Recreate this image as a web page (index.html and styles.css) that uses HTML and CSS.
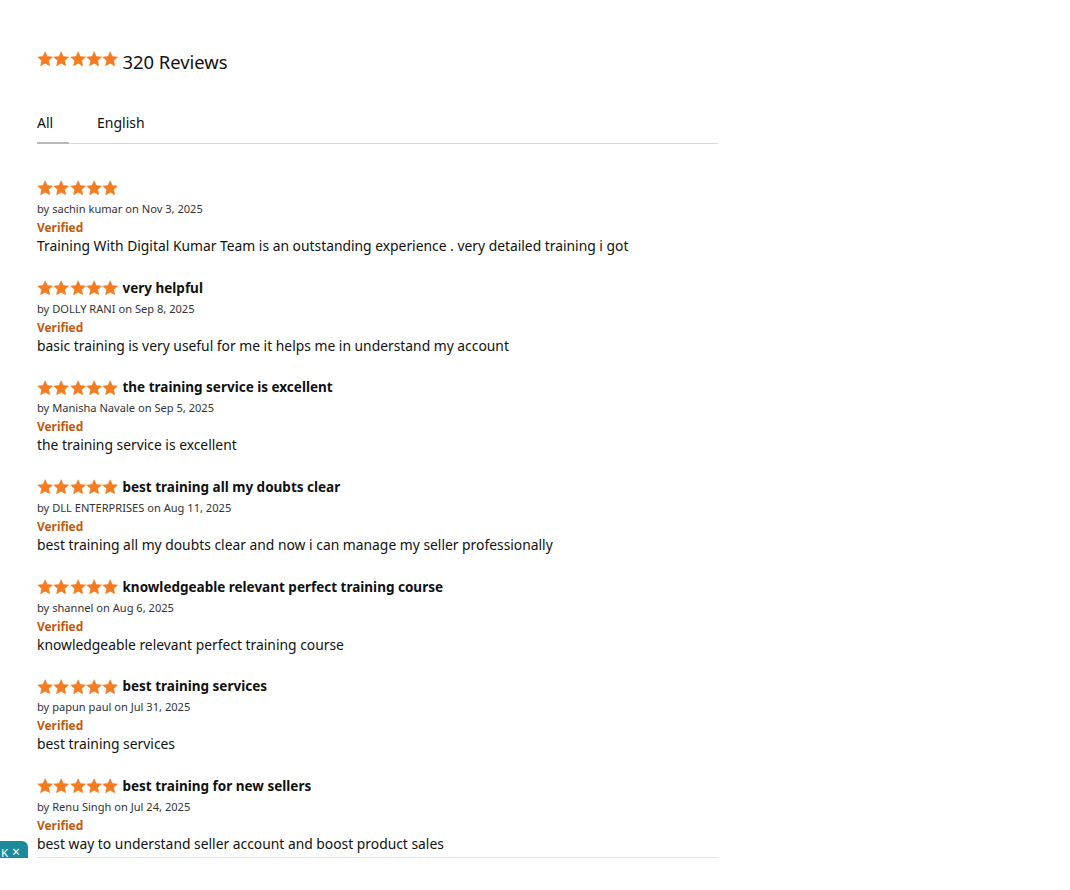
FILE: index.html
```html
<!DOCTYPE html>
<html lang="en">
<head>
<meta charset="utf-8">
<title>Reviews</title>
<link rel="stylesheet" href="styles.css">
</head>
<body>
<svg width="0" height="0" class="defs">
  <defs>
    <symbol id="star" viewBox="0 0 24 23">
      <path d="M12 1L15.17 8.13L22.94 8.95L17.14 14.17L18.76 21.8L12 17.9L5.24 21.8L6.86 14.17L1.06 8.95L8.83 8.13Z" stroke="#f47b1f" stroke-width="0.8" stroke-linejoin="round"/>
    </symbol>
  </defs>
</svg>

<main class="reviews">
  <header class="summary">
    <span class="stars stars-lg">
      <svg><use href="#star"/></svg><svg><use href="#star"/></svg><svg><use href="#star"/></svg><svg><use href="#star"/></svg><svg><use href="#star"/></svg>
    </span>
    <span class="count">320 Reviews</span>
  </header>

  <nav class="tabs">
    <span class="tab active">All</span>
    <span class="tab">English</span>
  </nav>

  <section class="list">
    <article class="review">
      <div class="head"><span class="stars"><svg><use href="#star"/></svg><svg><use href="#star"/></svg><svg><use href="#star"/></svg><svg><use href="#star"/></svg><svg><use href="#star"/></svg></span></div>
      <div class="by">by sachin kumar on Nov 3, 2025</div>
      <div class="verified">Verified</div>
      <p class="body">Training With Digital Kumar Team is an outstanding experience . very detailed training i got</p>
    </article>

    <article class="review">
      <div class="head"><span class="stars"><svg><use href="#star"/></svg><svg><use href="#star"/></svg><svg><use href="#star"/></svg><svg><use href="#star"/></svg><svg><use href="#star"/></svg></span><span class="title">very helpful</span></div>
      <div class="by">by DOLLY RANI on Sep 8, 2025</div>
      <div class="verified">Verified</div>
      <p class="body">basic training is very useful for me it helps me in understand my account</p>
    </article>

    <article class="review">
      <div class="head"><span class="stars"><svg><use href="#star"/></svg><svg><use href="#star"/></svg><svg><use href="#star"/></svg><svg><use href="#star"/></svg><svg><use href="#star"/></svg></span><span class="title">the training service is excellent</span></div>
      <div class="by">by Manisha Navale on Sep 5, 2025</div>
      <div class="verified">Verified</div>
      <p class="body">the training service is excellent</p>
    </article>

    <article class="review">
      <div class="head"><span class="stars"><svg><use href="#star"/></svg><svg><use href="#star"/></svg><svg><use href="#star"/></svg><svg><use href="#star"/></svg><svg><use href="#star"/></svg></span><span class="title">best training all my doubts clear</span></div>
      <div class="by">by DLL ENTERPRISES on Aug 11, 2025</div>
      <div class="verified">Verified</div>
      <p class="body">best training all my doubts clear and now i can manage my seller professionally</p>
    </article>

    <article class="review">
      <div class="head"><span class="stars"><svg><use href="#star"/></svg><svg><use href="#star"/></svg><svg><use href="#star"/></svg><svg><use href="#star"/></svg><svg><use href="#star"/></svg></span><span class="title">knowledgeable relevant perfect training course</span></div>
      <div class="by">by shannel on Aug 6, 2025</div>
      <div class="verified">Verified</div>
      <p class="body">knowledgeable relevant perfect training course</p>
    </article>

    <article class="review">
      <div class="head"><span class="stars"><svg><use href="#star"/></svg><svg><use href="#star"/></svg><svg><use href="#star"/></svg><svg><use href="#star"/></svg><svg><use href="#star"/></svg></span><span class="title">best training services</span></div>
      <div class="by">by papun paul on Jul 31, 2025</div>
      <div class="verified">Verified</div>
      <p class="body">best training services</p>
    </article>

    <article class="review last">
      <div class="head"><span class="stars"><svg><use href="#star"/></svg><svg><use href="#star"/></svg><svg><use href="#star"/></svg><svg><use href="#star"/></svg><svg><use href="#star"/></svg></span><span class="title">best training for new sellers</span></div>
      <div class="by">by Renu Singh on Jul 24, 2025</div>
      <div class="verified">Verified</div>
      <p class="body">best way to understand seller account and boost product sales</p>
    </article>
  </section>
</main>

<div class="chip">K <span class="x">×</span></div>
</body>
</html>
```

FILE: styles.css
```css
html, body {
  margin: 0;
  padding: 0;
  background: #ffffff;
}

body {
  font-family: "Noto Sans", "DejaVu Sans", sans-serif;
  color: #0f1111;
  width: 1070px;
  height: 890px;
  overflow: hidden;
  position: relative;
}

.defs {
  position: absolute;
  width: 0;
  height: 0;
}

.reviews {
  width: 681px;
  padding: 48px 0 0 37px;
}

/* star row */
.stars {
  display: inline-flex;
  fill: #f47b1f;
}

.stars svg {
  width: 16.3px;
  height: 15.6px;
  display: block;
}

.summary {
  display: flex;
  align-items: center;
  height: 26px;
}

.summary .stars {
  margin-top: -5px;
}

.count {
  font-size: 18.4px;
  margin-left: 4px;
  margin-top: 1px;
  color: #0f1111;
}

/* tabs */
.tabs {
  display: flex;
  margin-top: 39px;
  border-bottom: 1px solid #d5d9d9;
}

.tab {
  font-size: 14px;
  line-height: 20px;
  padding-bottom: 10px;
  margin-right: 28px;
  color: #0f1111;
}

.tab.active {
  width: 32px;
  border-bottom: 2px solid #b8b8b8;
  padding-bottom: 9px;
  margin-bottom: -1px;
}

/* reviews */
.list {
  margin-top: 34px;
}

.review {
  padding-bottom: 22.7px;
}

.review.last {
  padding-bottom: 3.5px;
  border-bottom: 1px solid #e3e6e6;
}

.head {
  display: flex;
  align-items: center;
  height: 20px;
}

.title {
  font-size: 13.5px;
  font-weight: 700;
  margin-left: 4px;
  line-height: 20px;
}

.by {
  font-size: 11.1px;
  line-height: 18px;
  margin-top: 2px;
  color: #333;
}

.verified {
  font-size: 11.9px;
  font-weight: 700;
  line-height: 18px;
  color: #c25a0c;
}

.body {
  margin: 0;
  font-size: 13.85px;
  line-height: 19px;
}

/* floating chip */
.chip {
  position: absolute;
  left: 0;
  top: 841px;
  width: 26px;
  height: 17px;
  padding: 0 1px 0 1px;
  border-radius: 0 6px 0 0;
  background: #1b8a9c;
  color: #fff;
  font-size: 11.5px;
  line-height: 21px;
  white-space: nowrap;
}

.chip .x {
  font-size: 14px;
  margin-left: 1px;
}
```
